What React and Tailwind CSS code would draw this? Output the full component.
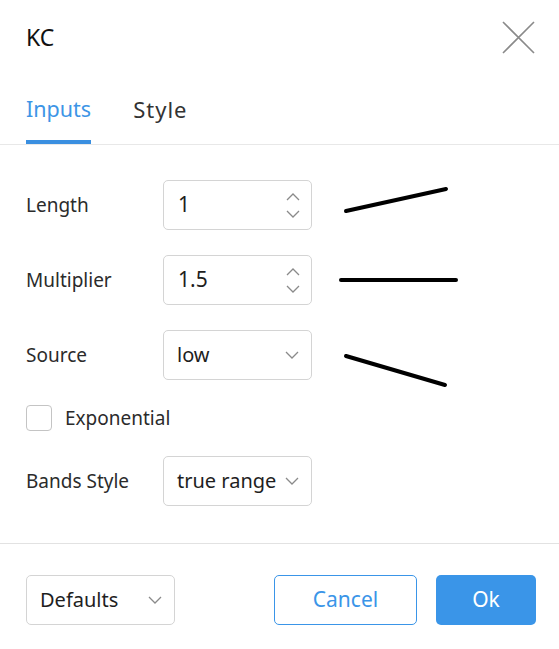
import React from "react";

function Spinner() {
  return (
    <div className="flex flex-col items-center gap-[9px] text-[#8a8a8a]">
      <svg width="14" height="8" viewBox="0 0 14 8" fill="none" stroke="currentColor" strokeWidth="1.3">
        <path d="M1 7 L7 1 L13 7" />
      </svg>
      <svg width="14" height="8" viewBox="0 0 14 8" fill="none" stroke="currentColor" strokeWidth="1.3">
        <path d="M1 1 L7 7 L13 1" />
      </svg>
    </div>
  );
}

function Chevron() {
  return (
    <svg width="14" height="8" viewBox="0 0 14 8" fill="none" stroke="#8a8a8a" strokeWidth="1.3">
      <path d="M1 1 L7 7 L13 1" />
    </svg>
  );
}

function Row({ label, children }) {
  return (
    <div className="flex items-center h-[50px]">
      <div className="w-[137px] text-[19px] text-[#2b2b2b]">{label}</div>
      {children}
    </div>
  );
}

function NumberBox({ value }) {
  return (
    <div className="w-[149px] h-[50px] border border-[#d4d4d4] rounded-[5px] flex items-center justify-between pl-[14px] pr-[11px]">
      <span className="text-[21px] text-[#1e1e1e]">{value}</span>
      <Spinner />
    </div>
  );
}

function SelectBox({ value }) {
  return (
    <div className="w-[149px] h-[50px] border border-[#d4d4d4] rounded-[5px] flex items-center justify-between pl-[13px] pr-[12px]">
      <span className="text-[20px] text-[#1e1e1e] whitespace-nowrap">{value}</span>
      <Chevron />
    </div>
  );
}

export default function App() {
  return (
    <div className="relative w-[559px] h-[649px] bg-white overflow-hidden" style={{ fontFamily: '"Noto Sans", "Open Sans", sans-serif' }}>
      {/* Header */}
      <div className="h-[74px] flex items-center justify-between pl-[26px] pr-[24px]">
        <h1 className="text-[23px] text-[#111]">KC</h1>
        <svg width="33" height="33" viewBox="0 0 33 33" stroke="#8a8a8a" strokeWidth="1.6">
          <path d="M1 1 L32 32 M32 1 L1 32" />
        </svg>
      </div>

      {/* Tabs */}
      <div className="h-[71px] flex items-end gap-[42px] px-[26px] border-b border-[#e8e8e8]">
        <div className="flex flex-col">
          <span className="text-[21.5px] text-[#3d95e6] leading-[28px]">Inputs</span>
          <div className="mt-[17px] h-[4px] bg-[#3a8fe0]" />
        </div>
        <div className="flex flex-col">
          <span className="text-[22px] text-[#333] leading-[28px] tracking-[1px]">Style</span>
          <div className="mt-[17px] h-[4px]" />
        </div>
      </div>

      {/* Body */}
      <div className="pt-[35px] pb-[37px] px-[26px] flex flex-col gap-[25px] border-b border-[#e2e2e2]">
        <Row label="Length">
          <NumberBox value="1" />
        </Row>
        <Row label="Multiplier">
          <NumberBox value="1.5" />
        </Row>
        <Row label="Source">
          <SelectBox value="low" />
        </Row>
        <div className="flex items-center gap-[13px] h-[26px]">
          <div className="w-[26px] h-[26px] border border-[#c4c4c4] rounded-[4px]" />
          <span className="text-[19px] text-[#2b2b2b]">Exponential</span>
        </div>
        <Row label="Bands Style">
          <SelectBox value="true range" />
        </Row>
      </div>

      {/* Footer */}
      <div className="pt-[31px] px-[26px] flex items-center">
        <SelectBox value="Defaults" />
        <div className="ml-auto flex gap-[19px]">
          <button className="w-[143px] h-[50px] border border-[#3a95e8] rounded-[5px] text-[21px] text-[#3a95e8]">Cancel</button>
          <button className="w-[100px] h-[50px] bg-[#3a95e8] rounded-[5px] text-[21px] text-white mr-[-3px]">Ok</button>
        </div>
      </div>

      {/* Hand-drawn marks */}
      <svg className="absolute inset-0 pointer-events-none" width="559" height="649">
        <g stroke="#000" strokeWidth="4" strokeLinecap="round">
          <path d="M346 211 L446 189" />
          <path d="M341 280 L456 280" />
          <path d="M346 356 L445 385" />
        </g>
      </svg>
    </div>
  );
}
